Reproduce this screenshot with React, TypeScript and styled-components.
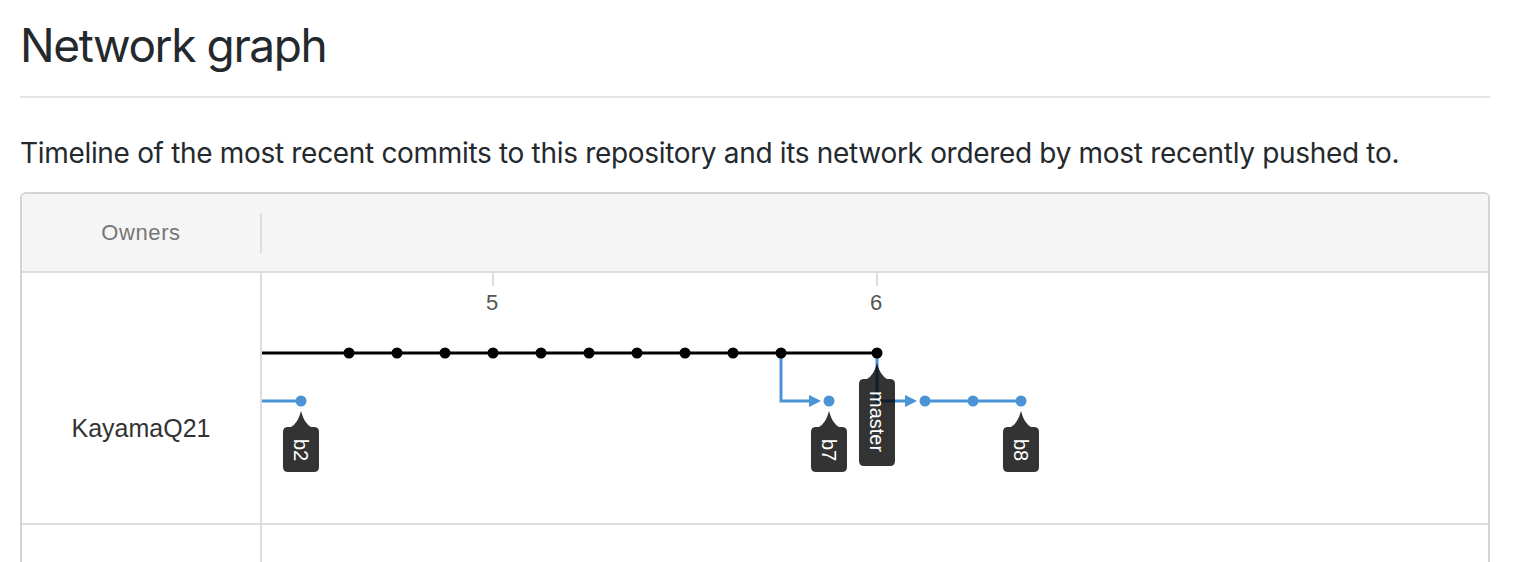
import React from 'react';
import styled, { createGlobalStyle } from 'styled-components';

const GlobalStyle = createGlobalStyle`
  html, body {
    margin: 0;
    padding: 0;
    background: #fff;
    overflow: hidden;
  }
  body {
    font-family: Inter, "Liberation Sans", sans-serif;
    color: #24292e;
  }
`;

const Page = styled.div`
  padding: 0 30px 0 20px;
`;

const Title = styled.h2`
  margin: 0;
  padding: 15px 0 21px;
  font-size: 46px;
  line-height: 60px;
  font-weight: 400;
  letter-spacing: -1.4px;
  border-bottom: 2px solid #e1e4e8;
`;

const Description = styled.p`
  margin: 35px 0 19px;
  font-size: 28px;
  line-height: 40px;
  letter-spacing: -0.32px;
`;

const GraphBox = styled.div`
  border: 2px solid #d1d5da;
  border-radius: 6px;
  overflow: hidden;
  font-family: "Liberation Sans", Arial, sans-serif;
`;

const HeaderRow = styled.div`
  display: flex;
  align-items: center;
  height: 77px;
  background: #f5f5f5;
  border-bottom: 2px solid #ddd;
`;

const OwnersHead = styled.div`
  width: 238px;
  text-align: center;
  font-size: 22px;
  letter-spacing: 0.6px;
  color: #767676;
`;

const HeaderDivider = styled.div`
  width: 2px;
  height: 40px;
  background: #ddd;
`;

const BodyRow = styled.div<{ rowHeight: number }>`
  display: flex;
  height: ${({ rowHeight }) => rowHeight}px;
  border-bottom: 2px solid #ddd;
`;

const OwnerCell = styled.div`
  width: 238px;
  flex-shrink: 0;
  box-sizing: content-box;
  border-right: 2px solid #ddd;
  padding-top: 140px;
  text-align: center;
  font-size: 25px;
  line-height: 30px;
  color: #333;
`;

const GraphCell = styled.div`
  flex: 1;
`;

const GraphSvg = styled.svg`
  display: block;
  width: 100%;
  height: 100%;
  font-family: "Liberation Sans", Arial, sans-serif;
`;

const BLUE = '#4a94d6';
const LABEL_FILL = 'rgba(0, 0, 0, 0.8)';

const MAIN_Y = 80;
const LANE_Y = 128;

const mainDots = [87, 135, 183, 231, 279, 327, 375, 423, 471, 519, 615];
const laneDots = [39, 567, 663, 711, 759];

const ticks = [
  { x: 231, label: '5' },
  { x: 615, label: '6' }
];

function Arrow({ x, y }: { x: number; y: number }) {
  // tip sits 8px before the commit dot
  return <polygon points={`${x - 20},${y - 6} ${x - 8},${y} ${x - 20},${y + 6}`} fill={BLUE} />;
}

function BranchLabel({ x, y, text }: { x: number; y: number; text: string }) {
  const len = text.length * 10.5 + 24;
  const top = y + 26;
  const tip = y + 10;
  const w = 36;
  const left = x - w / 2;
  const r = 5;
  const d = [
    `M ${x} ${tip}`,
    `Q ${x + 3} ${top - 4} ${x + 10} ${top}`,
    `L ${left + w - r} ${top}`,
    `Q ${left + w} ${top} ${left + w} ${top + r}`,
    `L ${left + w} ${top + len - r}`,
    `Q ${left + w} ${top + len} ${left + w - r} ${top + len}`,
    `L ${left + r} ${top + len}`,
    `Q ${left} ${top + len} ${left} ${top + len - r}`,
    `L ${left} ${top + r}`,
    `Q ${left} ${top} ${left + r} ${top}`,
    `L ${x - 10} ${top}`,
    `Q ${x - 3} ${top - 4} ${x} ${tip}`,
    'Z'
  ].join(' ');
  return (
    <g>
      <path d={d} fill={LABEL_FILL} />
      <text
        transform={`translate(${x}, ${top + 12}) rotate(90)`}
        fill="#fff"
        fontSize="20"
        dominantBaseline="central"
      >
        {text}
      </text>
    </g>
  );
}

function NetworkCanvas() {
  return (
    <GraphSvg viewBox="0 0 1226 250" preserveAspectRatio="xMinYMin meet">
      {ticks.map((t) => (
        <g key={t.label}>
          <line x1={t.x} y1={0} x2={t.x} y2={13} stroke="#ddd" strokeWidth={2} />
          <text x={t.x - 1} y={37} fontSize="22" fill="#555" textAnchor="middle">
            {t.label}
          </text>
        </g>
      ))}

      <line x1={0} y1={MAIN_Y} x2={615} y2={MAIN_Y} stroke="#000" strokeWidth={3} />

      <line x1={0} y1={LANE_Y} x2={39} y2={LANE_Y} stroke={BLUE} strokeWidth={3} />
      <polyline
        points={`519,${MAIN_Y} 519,${LANE_Y} 548,${LANE_Y}`}
        fill="none"
        stroke={BLUE}
        strokeWidth={3}
      />
      <Arrow x={567} y={LANE_Y} />
      <polyline
        points={`615,${MAIN_Y} 615,${LANE_Y} 644,${LANE_Y}`}
        fill="none"
        stroke={BLUE}
        strokeWidth={3}
      />
      <Arrow x={663} y={LANE_Y} />
      <line x1={663} y1={LANE_Y} x2={759} y2={LANE_Y} stroke={BLUE} strokeWidth={3} />

      {mainDots.map((x) => (
        <circle key={`m${x}`} cx={x} cy={MAIN_Y} r={5.5} fill="#000" />
      ))}
      {laneDots.map((x) => (
        <circle key={`l${x}`} cx={x} cy={LANE_Y} r={5.5} fill={BLUE} />
      ))}

      <BranchLabel x={39} y={LANE_Y} text="b2" />
      <BranchLabel x={567} y={LANE_Y} text="b7" />
      <BranchLabel x={615} y={MAIN_Y} text="master" />
      <BranchLabel x={759} y={LANE_Y} text="b8" />
    </GraphSvg>
  );
}

export default function App() {
  return (
    <>
      <GlobalStyle />
      <Page>
        <Title>Network graph</Title>
        <Description>
          Timeline of the most recent commits to this repository and its network ordered by most recently pushed to.
        </Description>
        <GraphBox>
          <HeaderRow>
            <OwnersHead>Owners</OwnersHead>
            <HeaderDivider />
          </HeaderRow>
          <BodyRow rowHeight={250}>
            <OwnerCell>KayamaQ21</OwnerCell>
            <GraphCell>
              <NetworkCanvas />
            </GraphCell>
          </BodyRow>
          <BodyRow rowHeight={250}>
            <OwnerCell />
            <GraphCell />
          </BodyRow>
        </GraphBox>
      </Page>
    </>
  );
}
